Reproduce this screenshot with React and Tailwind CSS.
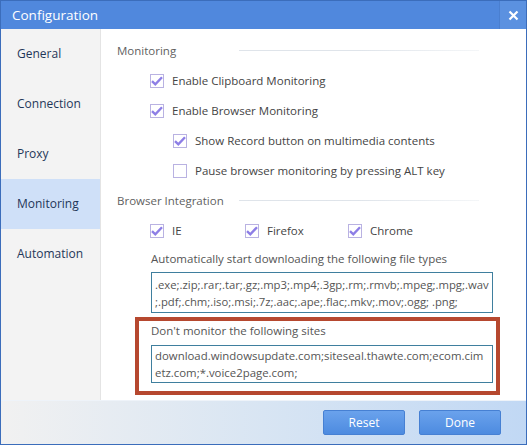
import React from 'react';

const font = { fontFamily: '"Open Sans", "Noto Sans", sans-serif' };

const Check = ({ checked }) => (
  <span className="w-[14px] h-[14px] border border-[#b9b2e2] bg-white flex items-center justify-center shrink-0">
    {checked && (
      <svg width="12" height="10" viewBox="0 0 12 10">
        <path d="M1 5.2 L4.3 8.3 L11 1.2" fill="none" stroke="#8d7ee6" strokeWidth="2.4" strokeLinejoin="miter" />
      </svg>
    )}
  </span>
);

const Option = ({ label, checked, indent }) => (
  <div className={`h-[30px] flex items-center gap-2 ${indent ? 'pl-[72px]' : 'pl-[49px]'}`}>
    <Check checked={checked} />
    <span className="text-[11.5px] text-[#444]">{label}</span>
  </div>
);

const SectionHeader = ({ title }) => (
  <div className="h-[30px] flex items-center pl-4 relative">
    <span className="text-[11.5px] text-[#5f5f5f]">{title}</span>
    <div className="absolute left-[138px] w-[240px] top-[14px] h-px bg-gradient-to-r from-[#dfe4ea] via-[#dfe4ea] to-[#f4f6f8]"></div>
  </div>
);

const navItems = ['General', 'Connection', 'Proxy', 'Monitoring', 'Automation'];

export default function App() {
  return (
    <div style={font} className="w-[527px] h-[445px] border border-[#3b6dbb] flex flex-col bg-white overflow-hidden">
      {/* title bar */}
      <div className="h-[28px] bg-[#5088dd] flex items-center justify-between">
        <span className="pl-[11px] text-[13.5px] text-white">Configuration</span>
        <div className="w-[27px] h-full bg-[#5b91e0] border-l border-[#4a7fd0] flex items-center justify-center">
          <svg width="11" height="11" viewBox="0 0 11 11">
            <path d="M1.5 1.5 L9.5 9.5 M9.5 1.5 L1.5 9.5" stroke="#fff" strokeWidth="2.2" />
          </svg>
        </div>
      </div>

      {/* body */}
      <div className="h-[371px] flex">
        <div className="w-[100px] bg-[#f3f3f3] border-r border-[#e4e4e4] flex flex-col">
          {navItems.map((item) => (
            <div
              key={item}
              className={`h-[50px] flex items-center pl-4 text-[12px] text-[#1f3759] ${item === 'Monitoring' ? 'bg-[#cfe0f8]' : ''}`}
            >
              {item}
            </div>
          ))}
        </div>

        <div className="flex-1 pt-[7px] flex flex-col">
          <SectionHeader title="Monitoring" />
          <Option label="Enable Clipboard Monitoring" checked />
          <Option label="Enable Browser Monitoring" checked />
          <Option label="Show Record button on multimedia contents" checked indent />
          <Option label="Pause browser monitoring by pressing ALT key" indent />
          <SectionHeader title="Browser Integration" />
          <div className="h-[30px] flex items-center pl-[49px]">
            <div className="w-[95px] flex items-center gap-2">
              <Check checked />
              <span className="text-[11.5px] text-[#444]">IE</span>
            </div>
            <div className="w-[103px] flex items-center gap-2">
              <Check checked />
              <span className="text-[11.5px] text-[#444]">Firefox</span>
            </div>
            <div className="flex items-center gap-2">
              <Check checked />
              <span className="text-[11.5px] text-[#444]">Chrome</span>
            </div>
          </div>
          <div className="h-[26px] flex items-center pl-[50px] text-[11.5px] text-[#555]">
            Automatically start downloading the following file types
          </div>
          <div className="ml-[50px] w-[342px] h-[41px] border border-[#3f7f9e] px-[3px] py-[3px] text-[11.3px] leading-[17px] text-[#555] whitespace-nowrap overflow-hidden">
            <div>.exe;.zip;.rar;.tar;.gz;.mp3;.mp4;.3gp;.rm;.rmvb;.mpeg;.mpg;.wav</div>
            <div>;.pdf;.chm;.iso;.msi;.7z;.aac;.ape;.flac;.mkv;.mov;.ogg; .png;</div>
          </div>

          <div className="mt-[4px] ml-[34px] w-[365px] border-4 border-[#b6482f] pl-3 pt-0 pb-[8px]">
            <div className="h-[20px] flex items-center text-[11.5px] text-[#555]">
              Don't monitor the following sites
            </div>
            <div className="mt-[4px] w-[342px] h-[38px] border border-[#3f7f9e] px-[3px] py-[1px] text-[11.4px] leading-[17px] text-[#555] whitespace-nowrap overflow-hidden">
              <div>download.windowsupdate.com;siteseal.thawte.com;ecom.cim</div>
              <div>etz.com;*.voice2page.com;</div>
            </div>
          </div>
        </div>
      </div>

      {/* footer */}
      <div className="h-[44px] bg-gradient-to-r from-[#f1f1f1] via-[#d8e5f3] to-[#c1d8f4] border-t border-[#eef3f9] flex items-center justify-end pr-[25px] gap-[14px]">
        <button className="w-[82px] h-[25px] rounded-[2px] border border-[#4680d3] bg-gradient-to-b from-[#6aa2ec] to-[#4d8be0] text-white text-[12px]">
          Reset
        </button>
        <button className="w-[82px] h-[25px] rounded-[2px] border border-[#4680d3] bg-gradient-to-b from-[#6aa2ec] to-[#4d8be0] text-white text-[12px]">
          Done
        </button>
      </div>
    </div>
  );
}
